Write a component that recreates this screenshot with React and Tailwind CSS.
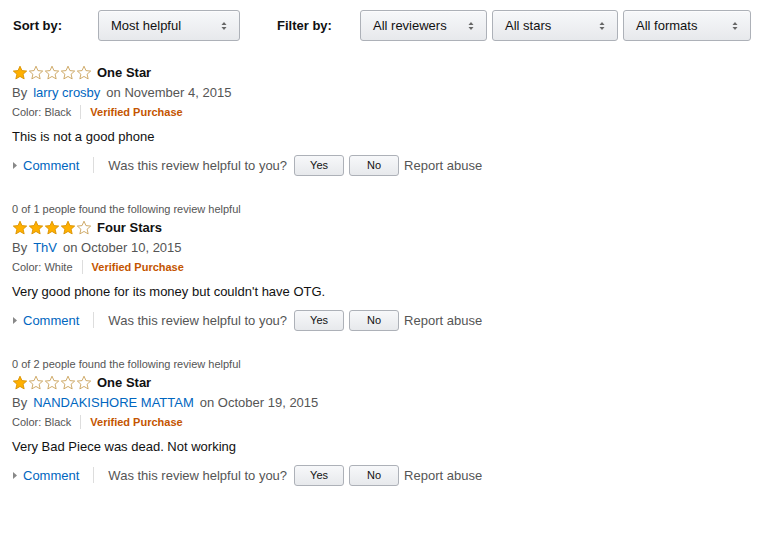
import React from 'react';

const font = { fontFamily: '"Liberation Sans", Arial, sans-serif' };

const Star = ({ filled }) => (
  <svg width="16" height="16" viewBox="0 0 16 16" className="block">
    <path
      d="M8 1.2 L9.95 5.6 L14.7 6.05 L11.1 9.2 L12.15 13.9 L8 11.45 L3.85 13.9 L4.9 9.2 L1.3 6.05 L6.05 5.6 Z"
      fill={filled ? '#ffb000' : '#ffffff'}
      stroke={filled ? '#d99200' : '#c9a25a'}
      strokeWidth="0.9"
      strokeLinejoin="round"
    />
  </svg>
);

const Stars = ({ count }) => (
  <div className="flex">
    {[0, 1, 2, 3, 4].map((i) => (
      <Star key={i} filled={i < count} />
    ))}
  </div>
);

const Arrows = () => (
  <svg width="6" height="10" viewBox="0 0 6 10" className="block">
    <path d="M3 1 L5.5 4 L0.5 4 Z" fill="#666" />
    <path d="M3 9 L5.5 6 L0.5 6 Z" fill="#666" />
  </svg>
);

const Select = ({ label, width }) => (
  <div
    className={`flex items-center justify-between h-[31px] pl-[12px] pr-[12px] rounded-[3px] border border-[#adb1b8] bg-gradient-to-b from-[#f7f8fa] to-[#e7e9ec] shadow-[0_1px_0_rgba(255,255,255,0.6)_inset] text-[13px] text-[#111] ${width}`}
  >
    <span>{label}</span>
    <Arrows />
  </div>
);

const SmallButton = ({ children }) => (
  <div className="flex items-center justify-center w-[50px] h-[21px] rounded-[3px] border border-[#adb1b8] bg-gradient-to-b from-[#f7f8fa] to-[#e7e9ec] text-[11px] text-[#111]">
    {children}
  </div>
);

const reviews = [
  {
    helpful: null,
    stars: 1,
    title: 'One Star',
    author: 'larry crosby',
    date: 'November 4, 2015',
    color: 'Black',
    text: 'This is not a good phone',
  },
  {
    helpful: '0 of 1 people found the following review helpful',
    stars: 4,
    title: 'Four Stars',
    author: 'ThV',
    date: 'October 10, 2015',
    color: 'White',
    text: "Very good phone for its money but couldn't have OTG.",
  },
  {
    helpful: '0 of 2 people found the following review helpful',
    stars: 1,
    title: 'One Star',
    author: 'NANDAKISHORE MATTAM',
    date: 'October 19, 2015',
    color: 'Black',
    text: 'Very Bad Piece was dead. Not working',
  },
];

// each row has a fixed height so the reviews line up at 155px steps
const Review = ({ review }) => (
  <div className="mt-[21px]">
    {review.helpful && (
      <div className="h-[16px] flex items-center text-[11px] text-[#555]">{review.helpful}</div>
    )}
    <div className="h-[20px] pt-[2px] flex items-center">
      <Stars count={review.stars} />
      <span className="ml-[5px] text-[13px] font-bold text-[#111]">{review.title}</span>
    </div>
    <div className="h-[20px] pt-[2px] flex items-center text-[13px] text-[#555]">
      <span>By</span>
      <span className="ml-[6px] text-[#0066c0]">{review.author}</span>
      <span className="ml-[6px]">on {review.date}</span>
    </div>
    <div className="h-[20px] flex items-center text-[11px]">
      <span className="text-[#555]">Color: {review.color}</span>
      <span className="mx-[9px] w-px h-[14px] bg-[#ddd]" />
      <span className="font-bold text-[#c45500]">Verified Purchase</span>
    </div>
    <div className="h-[28px] pt-[2px] flex items-center text-[13px] text-[#111]">{review.text}</div>
    <div className="h-[30px] flex items-center text-[13px]">
      <svg width="4" height="7" viewBox="0 0 4 7" className="ml-[1px] mt-[1px] block">
        <path d="M0 0 L4 3.5 L0 7 Z" fill="#888" />
      </svg>
      <span className="ml-[6px] pt-[2px] text-[#0066c0]">Comment</span>
      <span className="ml-[14px] w-px h-[16px] bg-[#ddd]" />
      <span className="ml-[14px] pt-[2px] text-[#555]">Was this review helpful to you?</span>
      <div className="ml-[7px] flex gap-[5px]">
        <SmallButton>Yes</SmallButton>
        <SmallButton>No</SmallButton>
      </div>
      <span className="ml-[5px] pt-[2px] text-[#555]">Report abuse</span>
    </div>
  </div>
);

export default function App() {
  return (
    <div className="w-[782px] h-[544px] bg-white overflow-hidden" style={font}>
      <div className="flex items-center pt-[10px] pl-[13px]">
        <span className="w-[85px] text-[13px] font-bold text-[#111]">Sort by:</span>
        <Select label="Most helpful" width="w-[142px]" />
        <span className="ml-[37px] w-[83px] text-[13px] font-bold text-[#111]">Filter by:</span>
        <div className="flex gap-[5px]">
          <Select label="All reviewers" width="w-[127px]" />
          <Select label="All stars" width="w-[126px]" />
          <Select label="All formats" width="w-[128px]" />
        </div>
      </div>
      <div className="pl-[12px]">
        {reviews.map((r, i) => (
          <Review key={i} review={r} />
        ))}
      </div>
    </div>
  );
}
